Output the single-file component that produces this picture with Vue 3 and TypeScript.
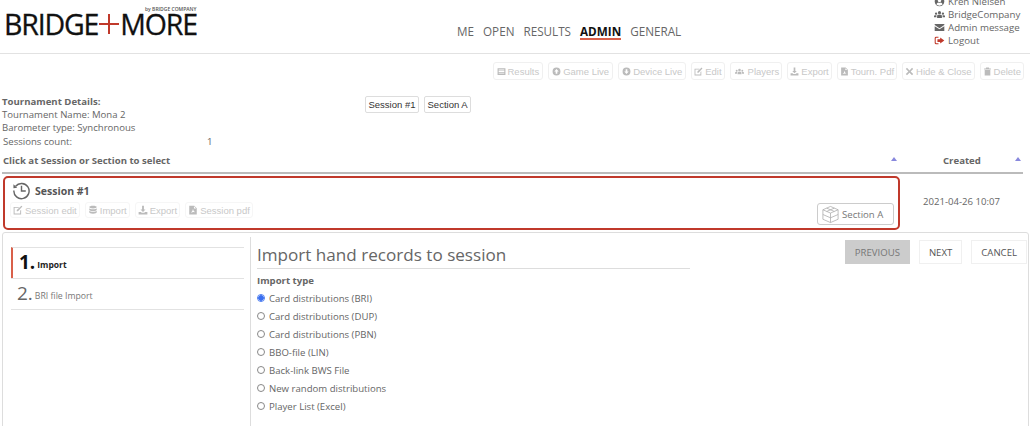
<script setup lang="ts">
// icon shapes on a 16x16 grid
const icons: Record<string, string> = {
  list: 'M1 2h14v12H1zM3 4.500v1.500h10V4.500zM3 7.300v1.500h10V7.300zM3 10v1.500h10V10z',
  up: 'M8 1a7 7 0 1 1 0 14A7 7 0 0 1 8 1zM8 3.500 4 8h2.500v4h3V8H12z',
  down: 'M8 1a7 7 0 1 1 0 14A7 7 0 0 1 8 1zM8 12.500 12 8H9.500V4h-3v4H4z',
  edit: 'M1 3h9L8.500 4.500H2.500v9h9V9L13 7.500V15H1zM13.500 1 15 2.500 8 10H6V8z',
  users: 'M8 3a2.300 2.300 0 1 1 0 4.600A2.300 2.300 0 0 1 8 3zM4.500 13V10.500Q4.500 8.500 6 8.500h4q1.500 0 1.500 2V13zM3 5a1.700 1.700 0 1 1 0 3.400A1.700 1.700 0 0 1 3 5zM13 5a1.700 1.700 0 1 1 0 3.400A1.700 1.700 0 0 1 13 5zM0 12V10q0-1 1.500-1h2Q3.500 10 3.500 12zM16 12v-2q0-1-1.500-1h-2q0 1 0 3z',
  export: 'M6.500 1h3v6H12L8 11 4 7h2.500zM1 11h3.500L6 12.500h4L11.500 11H15v4H1z',
  pdf: 'M2 1h8l4 4v10H2zM9.500 2v3.500H13zM4.500 12.500q3-2 3.500-6 .5 4 3.500 5-4-.5-7 1z',
  close: 'M3.500 1.500 8 6l4.500-4.500 2 2L10 8l4.500 4.500-2 2L8 10l-4.500 4.500-2-2L6 8 1.500 3.500z',
  trash: 'M5.500 1h5l.5 1.500h3V4.500H2V2.500h3zM3 5.500h10V15H3z',
  db: 'M8 1c3.500 0 6 1 6 2.300S11.500 5.600 8 5.600 2 4.600 2 3.300 4.500 1 8 1zM2 5c1 1.300 3 1.800 6 1.800S13 6.300 14 5v2.500C14 8.800 11.500 9.800 8 9.800S2 8.800 2 7.500zM2 9.200c1 1.300 3 1.800 6 1.800s5-.5 6-1.800v2.500C14 13 11.500 14 8 14s-6-1-6-2.300z',
  mail: 'M1 3h14v1.500L8 9 1 4.500zM1 6l7 4.500L15 6v7H1z',
  logout: 'M6.500 2.500H3Q1 2.500 1 4.500v7q0 2 2 2h3.500V12H3.500q-1 0-1-1V5q0-1 1-1h3zM9 3.500 15 8l-6 4.500V10H5V6h4z',
  user: 'M8 1a7 7 0 1 1 0 14A7 7 0 0 1 8 1zM8 4a2.500 2.500 0 1 0 0 5 2.500 2.500 0 0 0 0-5zM3.500 12.500q4.500 3 9 0Q12 10 10 9.500q-2 1.300-4 0-2 .5-2.500 3z'
}

const userLinks = [
  { label: 'Kren Nielsen', icon: 'user', tone: '' },
  { label: 'BridgeCompany', icon: 'users', tone: '' },
  { label: 'Admin message', icon: 'mail', tone: '' },
  { label: 'Logout', icon: 'logout', tone: 'red' }
]
const navItems = ['ME', 'OPEN', 'RESULTS', 'ADMIN', 'GENERAL']
const toolbar = [
  { label: 'Results', icon: 'list' },
  { label: 'Game Live', icon: 'up' },
  { label: 'Device Live', icon: 'down' },
  { label: 'Edit', icon: 'edit' },
  { label: 'Players', icon: 'users' },
  { label: 'Export', icon: 'export' },
  { label: 'Tourn. Pdf', icon: 'pdf' },
  { label: 'Hide & Close', icon: 'close' },
  { label: 'Delete', icon: 'trash' }
]
const sessionTools = [
  { label: 'Session edit', icon: 'edit' },
  { label: 'Import', icon: 'db' },
  { label: 'Export', icon: 'export' },
  { label: 'Session pdf', icon: 'pdf' }
]
const importTypes = [
  'Card distributions (BRI)',
  'Card distributions (DUP)',
  'Card distributions (PBN)',
  'BBO-file (LIN)',
  'Back-link BWS File',
  'New random distributions',
  'Player List (Excel)'
]
</script>

<template>
  <div class="page">
    <header class="top">
      <div class="logo">
        <span class="logo-by">by BRIDGE COMPANY</span>
        <span class="logo-word">BRIDGE<span class="plus"></span>MORE</span>
      </div>
      <nav class="nav">
        <a v-for="item in navItems" :key="item" :class="{ active: item === 'ADMIN' }">{{ item }}</a>
      </nav>
      <ul class="user">
        <li v-for="link in userLinks" :key="link.label" :class="link.tone">
          <svg viewBox="0 0 16 16" class="ico"><path :d="icons[link.icon]" fill-rule="evenodd" /></svg>
          {{ link.label }}
        </li>
      </ul>
    </header>

    <div class="toolbar">
      <button v-for="b in toolbar" :key="b.label" class="tool">
        <svg viewBox="0 0 16 16" class="ico"><path :d="icons[b.icon]" fill-rule="evenodd" /></svg>
        {{ b.label }}
      </button>
    </div>

    <section class="details">
      <div class="info">
        <strong>Tournament Details:</strong>
        <div>Tournament Name: Mona 2</div>
        <div>Barometer type: Synchronous</div>
        <div class="count"><span>Sessions count:</span><span>1</span></div>
      </div>
      <div class="crumbs">
        <span class="crumb">Session #1</span>
        <span class="crumb">Section A</span>
      </div>
    </section>

    <div class="table-head">
      <strong class="th-main">Click at Session or Section to select</strong>
      <i class="arrow"></i>
      <strong class="th-created">Created</strong>
      <i class="arrow"></i>
    </div>

    <div class="table-row">
      <div class="session">
        <div class="session-left">
          <div class="session-title">
            <svg viewBox="0 0 20 20" class="clock">
              <path d="M3.800 5.500A8 8 0 1 1 2 10" fill="none" stroke="#666" stroke-width="1.500" />
              <path d="M1.500 3.500 5.500 7 1.500 7.500z" fill="#666" />
              <path d="M10 5v5.500h4.500" fill="none" stroke="#666" stroke-width="1.500" />
            </svg>
            Session #1
          </div>
          <div class="session-tools">
            <button v-for="b in sessionTools" :key="b.label" class="tool">
              <svg viewBox="0 0 16 16" class="ico"><path :d="icons[b.icon]" fill-rule="evenodd" /></svg>
              {{ b.label }}
            </button>
          </div>
        </div>
        <button class="section-btn">
          <svg viewBox="0 0 20 20" class="cube">
            <path d="M10 1.500 18 5v10l-8 3.500L2 15V5zM2 5l8 3.500L18 5M10 8.500v10M6 3.300l8 3.500M14 3.300 6 6.800M2 10l8 3.500 8-3.500" fill="none" stroke="#aaa" stroke-width=".8" />
          </svg>
          Section A
        </button>
      </div>
      <div class="created">2021-04-26 10:07</div>
    </div>

    <section class="wizard">
      <aside class="steps">
        <div class="step current"><b>1.</b><span>Import</span></div>
        <div class="step"><b>2.</b><span>BRI file Import</span></div>
      </aside>
      <div class="pane">
        <div class="pane-main">
          <h2>Import hand records to session</h2>
          <div class="type-label">Import type</div>
          <label v-for="(t, i) in importTypes" :key="t" class="radio">
            <span class="dot" :class="{ on: i === 0 }"></span>{{ t }}
          </label>
        </div>
        <div class="actions">
          <button class="act disabled">PREVIOUS</button>
          <button class="act">NEXT</button>
          <button class="act">CANCEL</button>
        </div>
      </div>
    </section>
  </div>
</template>

<style>
html, body {
  margin: 0;
  height: 426px;
  overflow: hidden;
  background: #fff;
}
</style>

<style scoped>
.page {
  width: 1030px;
  height: 426px;
  overflow: hidden;
  font-family: "Open Sans", sans-serif;
  font-size: 9.600px;
  color: #666;
}
.ico {
  width: 9px;
  height: 9px;
  fill: currentColor;
  flex: none;
}

/* header */
.top {
  height: 53px;
  border-bottom: 1px solid #e2e2e2;
  display: flex;
  position: relative;
}
.logo {
  width: 457px;
  padding: 6px 0 0 4px;
  box-sizing: border-box;
  display: flex;
  flex-direction: column;
}
.logo-by {
  align-self: flex-start;
  margin-left: 141px;
  font-size: 5px;
  line-height: 6px;
  color: #555;
  font-weight: 600;
  white-space: nowrap;
}
.logo-word {
  font-size: 28.500px;
  line-height: 22px;
  letter-spacing: -1.150px;
  color: #111;
  -webkit-text-stroke: 0.3px #111;
  display: flex;
  align-items: center;
  margin-top: 1px;
}
.plus {
  width: 20px;
  height: 20px;
  margin: 0 1px;
  background:
    linear-gradient(#c0392b, #c0392b) center / 20px 2px no-repeat,
    linear-gradient(#c0392b, #c0392b) center / 2px 20px no-repeat;
}
.nav {
  display: flex;
  gap: 9px;
  font-size: 11.700px;
  line-height: 16px;
  padding-top: 23px;
  color: #666;
}
.nav a {
  height: 15px;
}
.nav a.active {
  font-weight: 700;
  color: #111;
  border-bottom: 2px solid #d9604a;
}
.user {
  list-style: none;
  margin: -5px 0 0 auto;
  padding: 0 8px 0 0;
  width: 88px;
  font-size: 9.700px;
  line-height: 13px;
  white-space: nowrap;
}
.user li {
  display: flex;
  align-items: center;
  gap: 3px;
  height: 13px;
}
.user .ico {
  width: 11px;
  height: 11px;
}
.user .red .ico {
  fill: #c0392b;
}

/* toolbars */
.toolbar {
  display: flex;
  justify-content: flex-end;
  gap: 5px;
  padding: 8px 6px 0 0;
}
.tool {
  display: inline-flex;
  align-items: center;
  gap: 2px;
  height: 18px;
  padding: 0 2px;
  border: 1px solid #f0f0f0;
  border-radius: 3px;
  background: #fff;
  color: #c8c8c8;
  font-family: "Liberation Sans", sans-serif;
  font-size: 9.500px;
  white-space: nowrap;
}
.tool .ico {
  fill: #bbb;
}
.toolbar .tool:nth-child(-n+3) {
  padding: 0 3px;
}
.toolbar .tool:nth-child(5) .ico {
  width: 13px;
}

/* details */
.details {
  display: flex;
  padding: 15px 0 0 2px;
  height: 72px;
  box-sizing: border-box;
}
.info {
  width: 363px;
  line-height: 13px;
}
.info strong {
  font-weight: 700;
}
.count {
  display: flex;
  padding: 1px 0 0 1px;
}
.count span:first-child {
  width: 204px;
}
.crumbs {
  display: flex;
  gap: 5px;
  align-items: flex-start;
  margin-top: 1px;
}
.crumb {
  border: 1px solid #ddd;
  border-radius: 2px;
  height: 15px;
  line-height: 15px;
  padding: 0 2.500px;
  font-family: "Liberation Sans", sans-serif;
  font-size: 9.500px;
  color: #333;
}

/* table */
.table-head {
  margin: 1px 7px 0 2px;
  height: 15px;
  padding-bottom: 4px;
  border-bottom: 2px solid #bbb;
  display: flex;
  align-items: center;
  line-height: 14px;
}
.table-head strong {
  font-weight: 700;
}
.th-main {
  padding-left: 1px;
  width: 888px;
}
.th-created {
  margin-left: 46px;
  width: 72px;
}
.arrow {
  width: 0;
  height: 0;
  border: 3px solid transparent;
  border-top: 0;
  border-bottom: 4px solid #8888dd;
  margin-bottom: 3px;
}
.table-row {
  display: flex;
  margin: 2px 0 0 3px;
  height: 54px;
}
.session {
  width: 897px;
  box-sizing: border-box;
  border: 2px solid #c0392b;
  border-radius: 5px;
  display: flex;
  justify-content: space-between;
  padding: 3px 4px 3px 5px;
}
.session-title {
  display: flex;
  align-items: center;
  gap: 4px;
  padding-left: 2px;
  font-size: 10.500px;
  font-weight: 700;
  color: #555;
  height: 19px;
}
.clock {
  width: 19px;
  height: 19px;
}
.session-tools {
  display: flex;
  gap: 5px;
  margin-top: 2px;
}
.session-tools .tool {
  height: 16px;
  border-color: #f6f6f6;
}
.session-tools .ico {
  width: 10px;
  height: 10px;
}
.section-btn {
  align-self: flex-end;
  width: 77px;
  height: 22px;
  display: flex;
  align-items: center;
  gap: 2px;
  padding: 0 3px;
  border: 1px solid #ccc;
  border-radius: 3px;
  background: #fff;
  color: #777;
  font-family: "Open Sans", sans-serif;
  font-size: 9.600px;
}
.cube {
  width: 19px;
  height: 19px;
}
.created {
  margin-left: 23px;
  padding-top: 19px;
  line-height: 14px;
  white-space: nowrap;
}

/* wizard */
.wizard {
  margin: 2px 1px 0 2px;
  height: 200px;
  border: 1px solid #ddd;
  border-radius: 3px;
  display: flex;
  box-sizing: border-box;
}
.steps {
  width: 233px;
  margin: 14px 0 0 8px;
}
.step {
  height: 30px;
  border-top: 1px solid #e2e2e2;
  display: flex;
  align-items: center;
  gap: 2px;
  padding-left: 6px;
  font-size: 8.700px;
  color: #777;
}
.step:last-child {
  border-bottom: 1px solid #e2e2e2;
}
.step b {
  font-size: 19px;
  font-weight: 400;
  color: #666;
  line-height: 20px;
  margin-top: -2px;
}
.step span {
  margin-top: 3px;
}
.step.current {
  border-left: 2px solid #d9604a;
  padding-left: 6px;
  color: #222;
  font-weight: 700;
  font-size: 8.500px;
}
.step.current b {
  font-weight: 700;
  color: #111;
}
.pane {
  flex: 1;
  margin: 4px 0 0 6px;
  border-left: 1px solid #ddd;
  padding-left: 6px;
  display: flex;
  justify-content: space-between;
}
.pane-main {
  width: 433px;
}
h2 {
  margin: 0;
  padding-top: 5px;
  height: 26px;
  font-size: 17.100px;
  line-height: 25px;
  font-weight: 400;
  color: #666;
  border-bottom: 1px solid #ddd;
  white-space: nowrap;
}
.type-label {
  font-weight: 700;
  line-height: 14px;
  margin: 5px 0 1px;
}
.radio {
  display: flex;
  align-items: center;
  height: 18px;
  gap: 4px;
  white-space: nowrap;
}
.dot {
  width: 6px;
  height: 6px;
  border: 1px solid #888;
  border-radius: 50%;
  flex: none;
  background: #fff;
}
.dot.on {
  border-color: #4a7cf0;
  background: radial-gradient(circle, #3b6ff0 0 2.500px, #fff 3px);
}
.actions {
  display: flex;
  gap: 9px;
  padding: 3px 1px 0 0;
}
.act {
  height: 24px;
  padding: 0 9px;
  border: 1px solid #f0f0f0;
  background: #fff;
  color: #555;
  font-family: "Open Sans", sans-serif;
  font-size: 9.600px;
}
.act.disabled {
  background: #ccc;
  border-color: #ccc;
  color: #777;
}
</style>
